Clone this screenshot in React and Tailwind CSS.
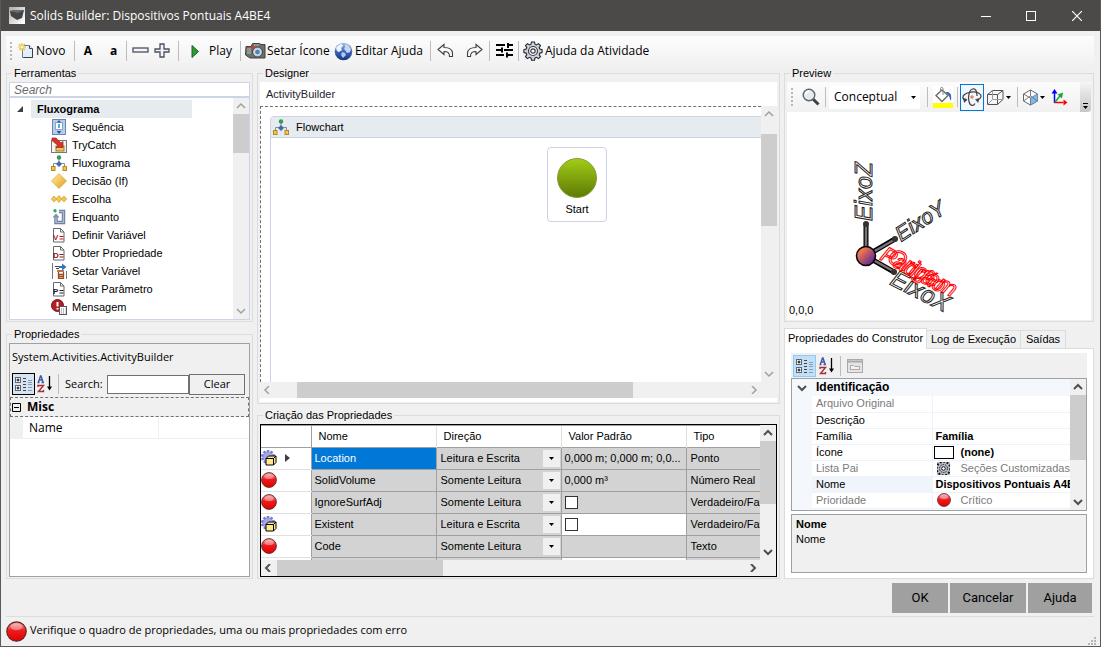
import React from 'react';

const UI = 'font-["Open_Sans",sans-serif]';

/* ---------- icons ---------- */

const NewIcon = () => (
    <svg width="16" height="16" viewBox="0 0 16 16">
        <path d="M4.500 2.500h7l3 3v9h-10z" fill="#e3eefb" stroke="#6a7d94" />
        <path d="M11.500 2.500v3h3" fill="#fff" stroke="#33475e" />
        <path d="M14.500 6v8.500h-9" fill="none" stroke="#2f4053" />
        <path d="M4 0v8M0 4h8M1 1l6 6M7 1l-6 6" stroke="#e9c23c" strokeWidth="1.200" />
        <circle cx="4" cy="4" r="1.500" fill="#fff7c0" />
    </svg>
);

const MinusIcon = () => (
    <svg width="17" height="16" viewBox="0 0 17 16">
        <rect x="1" y="5" width="15" height="4" fill="#f2f4fa" stroke="#4c5060" strokeWidth="1.300" />
    </svg>
);

const PlusIcon = () => (
    <svg width="16" height="16" viewBox="0 0 16 16">
        <path d="M6 1h4v5h5v3h-5v5h-4v-5h-5v-3h5z" fill="#f2f4fa" stroke="#4c5060" strokeWidth="1.300" />
    </svg>
);

const PlayIcon = () => (
    <svg width="8" height="13" viewBox="0 0 8 13">
        <path d="M1 .500l6.500 6-6.500 6z" fill="#2f9a32" stroke="#1d6322" />
    </svg>
);

const CameraIcon = () => (
    <svg width="21" height="18" viewBox="0 0 21 18">
        <path d="M1 4.500h5l1.500-3h7l1.500 1h4v13.500h-15l-4.500-3z" fill="#6d6f6c" stroke="#3f423f" />
        <path d="M2 7h4M2 9h4M2 11h4" stroke="#b8bab5" />
        <path d="M9 3h5" stroke="#b8bab5" />
        <circle cx="12.500" cy="10" r="5" fill="#b9c3cc" stroke="#41474c" />
        <circle cx="12.500" cy="10" r="3" fill="#4f86b8" stroke="#e8eef2" />
        <circle cx="7.500" cy="5.500" r="1.500" fill="#f22" />
    </svg>
);

const GlobeIcon = () => (
    <svg width="19" height="19" viewBox="0 0 19 19">
        <defs>
            <linearGradient id="globe" x2="0" y2="1">
                <stop offset="0" stopColor="#a8bfe6" />
                <stop offset=".500" stopColor="#3a68bd" />
                <stop offset="1" stopColor="#16347c" />
            </linearGradient>
        </defs>
        <circle cx="9.500" cy="9.500" r="8.800" fill="url(#globe)" />
        <path d="M2 6c2-3 4-4 6-4l1 2-2 2 1 2-3 2-2-1z" fill="#eef4fc" />
        <path d="M11 2l3 1 3 4-1 3-3 1-2-3-1-1 1-2z" fill="#c6d6f0" />
        <path d="M8 10l3 1 1 2-3 3-2-3z" fill="#b4c9ea" />
    </svg>
);

const UndoIcon = ({ flip }) => (
    <svg width="17" height="16" viewBox="0 0 17 16">
        <path
            d={
                flip
                    ? 'M16 6.500l-6-5v3c-5 0-8.500 2-8.500 6v3h3c0-3.500 1.500-5 5.500-5v3z'
                    : 'M1 6.500l6-5v3c5 0 8.500 2 8.500 6v3h-3c0-3.500-1.500-5-5.500-5v3z'
            }
            fill="#fafafa"
            stroke="#3c3f45"
            strokeWidth="1.100"
        />
    </svg>
);

const SlidersIcon = () => (
    <svg width="17" height="16" viewBox="0 0 17 16" stroke="#000" strokeWidth="2">
        <path d="M0 2h9M12 2h5M12 0v5M0 7h5M8 7h9M6 4.500v5M0 12h8M12 12h5M11 9.500v5" />
    </svg>
);

const GearIcon = () => (
    <svg width="20" height="20" viewBox="0 0 20 20">
        <path
            d="M8.500 1h3l.500 2.200 1.500.700 2-1.300 2 2-1.300 2 .700 1.500 2.200.500v3l-2.200.500-.700 1.500 1.300 2-2 2-2-1.300-1.500.700-.500 2.200h-3l-.500-2.200-1.500-.700-2 1.300-2-2 1.300-2-.700-1.500-2.200-.500v-3l2.200-.500.700-1.500-1.300-2 2-2 2 1.300 1.500-.700z"
            fill="#cdd1dc"
            stroke="#24272e"
            strokeWidth="1.100"
        />
        <circle cx="10" cy="10" r="4.500" fill="#f3f4f8" stroke="#3a3d46" strokeWidth="1.200" />
        <circle cx="10" cy="10" r="2.200" fill="#fff" stroke="#3a3d46" strokeWidth="1.200" />
    </svg>
);

const SmallGearIcon = () => (
    <svg width="13" height="13" viewBox="0 0 13 13" fill="none" stroke="#15171c">
        <rect width="13" height="13" fill="#b9bec9" stroke="none" />
        <circle cx="6.500" cy="6.500" r="6.800" strokeWidth="2" strokeDasharray="2 1.500" />
        <circle cx="6.500" cy="6.500" r="4" strokeDasharray="1.500 1" />
        <circle cx="6.500" cy="6.500" r="1.800" fill="#fff" />
    </svg>
);

const FlowIcon = () => (
    <svg width="16" height="16" viewBox="0 0 16 16">
        <path d="M8 4v4M2.500 11v-2.500h11v2.500" fill="none" stroke="#7e8fa8" />
        <circle cx="8" cy="2.500" r="2.200" fill="#2f9c55" />
        <path d="M8 6l3 3-3 3-3-3z" fill="#4668ad" />
        <rect x=".500" y="11.500" width="3.500" height="4" fill="#f0c64a" stroke="#b38a1f" />
        <rect x="12" y="11.500" width="3.500" height="4" fill="#f0c64a" stroke="#b38a1f" />
    </svg>
);

const SequenceIcon = () => (
    <svg width="16" height="16" viewBox="0 0 16 16">
        <rect x="1.500" y=".500" width="13" height="15" fill="#b9cdea" stroke="#6d86ad" />
        <rect x="4.500" y="3.500" width="7" height="7" fill="#fff" stroke="#8da4c6" />
        <path d="M8 1l2 2.500h-4zM8 15l2.500-3h-5z" fill="#2457b4" />
        <path d="M8 5v4" stroke="#49b7d6" strokeWidth="2" />
    </svg>
);

const TryIcon = () => (
    <svg width="16" height="16" viewBox="0 0 16 16">
        <rect x=".500" y="3.500" width="15" height="12" fill="#f3f3f3" stroke="#777" />
        <rect x="5" y="9" width="8" height="5" fill="#f3c95b" stroke="#9a7a28" />
        <path d="M1 1h4l5 5 2-1.500v6h-7l2-2-6-5z" fill="#dc3328" stroke="#9c1f18" strokeWidth=".700" />
    </svg>
);

const DecisionIcon = () => (
    <svg width="16" height="16" viewBox="0 0 16 16">
        <defs>
            <linearGradient id="gold" x2="1" y2="1">
                <stop offset=".200" stopColor="#fbe08a" />
                <stop offset=".900" stopColor="#e0a52a" />
            </linearGradient>
        </defs>
        <path d="M8 .500l7.500 7.500-7.500 7.500-7.500-7.500z" fill="url(#gold)" stroke="#d6a433" strokeWidth=".700" />
    </svg>
);

const ChoiceIcon = () => (
    <svg width="16" height="16" viewBox="0 0 16 16" fill="#f3c84e" stroke="#cf9d2a" strokeWidth=".700">
        <path d="M3 5l2.700 3-2.700 3-2.700-3z" />
        <path d="M13 5l2.700 3-2.700 3-2.700-3z" />
        <path d="M8 4.500l3 3.500-3 3.500-3-3.500z" />
    </svg>
);

const WhileIcon = () => (
    <svg width="16" height="16" viewBox="0 0 16 16">
        <path d="M8 2.500h4.500v11h-7.500v-6" fill="none" stroke="#62748f" strokeWidth="3.400" />
        <path d="M8 2.500h4.500v11h-7.500v-6" fill="none" stroke="#a9bbd6" strokeWidth="1.600" />
        <path d="M5 4.500l3.500 4h-7z" fill="#7d90ad" />
        <circle cx="4" cy="1.800" r="1.700" fill="#35a765" />
    </svg>
);

const DocIcon = ({ letter, color }) => (
    <svg width="16" height="16" viewBox="0 0 16 16">
        <path d="M2.500 1.500h7l3.500 3.500v10h-10.500z" fill="#fff" stroke="#686868" />
        <path d="M9.500 1.500v3.500h3.500" fill="none" stroke="#686868" />
        <text x="2" y="13" fontSize="8" fontWeight="700" fontFamily="Liberation Sans" fill={color}>
            {letter}
        </text>
        <path d="M8.500 9.500h4M8.500 12h4" stroke={color} />
    </svg>
);

const SetVarIcon = () => (
    <svg width="16" height="16" viewBox="0 0 16 16">
        <path d="M1.500 0v16M15.500 8v8" stroke="#777" />
        <path d="M4 3.500h4M5 5.500h3" stroke="#444" />
        <path d="M8 3h3v-2.500l4.500 3.500-4.500 3.500v-2.500h-3z" fill="#2f74c0" />
        <path d="M6 8h7M7.500 9v6.500h5v-6.500M7 11.500h5M7 13.500h5" fill="none" stroke="#9c4a1c" strokeWidth="1.300" />
    </svg>
);

const MessageIcon = () => (
    <svg width="16" height="16" viewBox="0 0 16 16">
        <circle cx="6.500" cy="6.500" r="6" fill="#b21f24" stroke="#7c1216" />
        <path d="M6.500 3v4.500M6.500 9v1.500" stroke="#fff" strokeWidth="2" />
        <rect x="8.500" y="7.500" width="7" height="8" fill="#fff" stroke="#555" />
        <path d="M10 10h4.500M10 12h4.500M10 14h4.500" stroke="#777" strokeDasharray="1 1" />
    </svg>
);

const CategoryIcon = () => (
    <svg width="18" height="16" viewBox="0 0 18 16">
        <rect x=".500" y="1.500" width="5" height="5" fill="#fff" stroke="#5a6578" />
        <rect x=".500" y="9.500" width="5" height="5" fill="#fff" stroke="#5a6578" />
        <path d="M1.500 4h3M3 2.500v3M1.500 12h3M3 10.500v3" stroke="#000" />
        <path d="M8 2.500h3M8 5.500h3M8 8.500h3M8 11.500h3M8 14.500h3" stroke="#444" />
        <path d="M13 4.500h4M13 6.500h4M13 8.500h4M13 11.500h4M13 14.500h4" stroke="#8c9ab2" />
    </svg>
);

const SortIcon = () => (
    <svg width="16" height="18" viewBox="0 0 16 18">
        <path d="M.500 7.500h2M4.500 7.500h2.500M1.500 7l2-6h.500l2 6M2.500 5h3" fill="none" stroke="#3a5ba8" strokeWidth="1.400" />
        <path d="M1 12v-1.500h5.500l-5 6h5v-1.500" fill="none" stroke="#a5303a" strokeWidth="1.400" />
        <path d="M12.500 1v12" stroke="#000" strokeWidth="1.300" />
        <path d="M10 11.500h5l-2.500 4z" />
    </svg>
);

const RedBall = ({ size }) => (
    <svg width={size} height={size} viewBox="0 0 16 16" className="shrink-0">
        <defs>
            <linearGradient id="ball" x2="0" y2="1">
                <stop offset="0" stopColor="#f6a9a9" />
                <stop offset=".450" stopColor="#ee1c1c" />
                <stop offset="1" stopColor="#e00000" />
            </linearGradient>
        </defs>
        <circle cx="8" cy="8" r="7.400" fill="url(#ball)" stroke="#5e2626" strokeWidth=".900" />
        <ellipse cx="8" cy="4.500" rx="4.500" ry="2.600" fill="#fff" fillOpacity=".350" />
    </svg>
);

const GearBox = () => (
    <svg width="16" height="16" viewBox="0 0 16 16">
        <circle cx="7" cy="7" r="6" fill="none" stroke="#7678cc" strokeWidth="2.200" strokeDasharray="2.400 1.370" />
        <circle cx="7" cy="7" r="5.200" fill="#a3a5ec" stroke="#7678cc" strokeWidth=".700" />
        <path d="M5 8.500l2.500-2.500h7.500v6.500l-2.500 2.500h-7.500z" fill="#ffe98a" stroke="#000" />
        <path d="M5 8.500h7.500v6.500M12.500 8.500l2.500-2.500" fill="none" stroke="#000" />
    </svg>
);

const MagnifierIcon = () => (
    <svg width="18" height="18" viewBox="0 0 18 18">
        <path d="M11 11l5.500 5.500" stroke="#3c4146" strokeWidth="3" />
        <circle cx="7" cy="7" r="5.800" fill="#e3edf0" stroke="#5d666b" strokeWidth="1.400" />
        <path d="M3.500 6c.500-2 2-2.800 4-2.800" fill="none" stroke="#fff" strokeWidth="1.500" />
    </svg>
);

const BucketIcon = () => (
    <svg width="20" height="22" viewBox="0 0 20 22">
        <rect width="20" height="17" fill="#fff" />
        <rect y="17" width="20" height="5" fill="#ff0" />
        <path d="M9 4l6 5.500-6 6-6-6z" fill="#fff" stroke="#666" strokeWidth="1.300" />
        <path d="M10 9v-6.500c0-1.500-2.500-1.500-2.500 0v3.500" fill="none" stroke="#888" />
        <path d="M12.500 6c4.500-.500 6.500 2 5.500 8.500-1.500-1-1-4-3-6z" fill="#2a6ba8" />
    </svg>
);

const OrbitIcon = () => (
    <svg width="20" height="19" viewBox="0 0 20 19" fill="none" stroke="#3f4347" strokeWidth="1.200">
        <path d="M13 15.500c-1.500 3-5 2.500-6-2s0-11.500 3.500-12.500 4.500 3 4.500 7" />
        <path d="M4.500 12.500c-3.500-.500-5-3.500-2-6s10-3.500 14-1.500 3 5.500-1 7" />
        <path d="M1 10l4 1.500-2.500 3zM13.500 11.500l3.500-1-1 4z" fill="#3f4347" strokeWidth=".500" />
        <path d="M8 9h4M10 7v4" stroke="#d76a3a" strokeWidth="1" />
    </svg>
);

const WireCubeIcon = () => (
    <svg width="17" height="17" viewBox="0 0 17 17" fill="none" stroke="#50545a">
        <path d="M.500 5.500h10v10h-10zM.500 5.500l5-4h10.500l-5.500 4M16 1.500v9l-5.500 5" />
        <path d="M5.500 1.500v9h10.500M.500 15.500l5-5" stroke="#9a9ea4" />
    </svg>
);

const ShadedCubeIcon = () => (
    <svg width="17" height="17" viewBox="0 0 17 17">
        <path d="M8.500 1l7 4v7l-7 4-7-4v-7z" fill="#fff" stroke="#666" />
        <path d="M8.500 9l7-4v7l-7 4z" fill="#7dbbed" stroke="#6c8ca8" />
        <path d="M1.500 5l7 4v7M8.500 1v6M1.500 12l7-5 7 5" fill="none" stroke="#777" />
    </svg>
);

const AxesIcon = () => (
    <svg width="17" height="17" viewBox="0 0 17 17">
        <path d="M3.500 14v-10" stroke="#00f" strokeWidth="1.500" />
        <path d="M3.500 0l3 4.500h-6z" fill="#00f" />
        <path d="M3.500 13.500h9" stroke="#f00" strokeWidth="1.500" />
        <path d="M16.500 13.500l-4 3v-6z" fill="#f00" />
        <path d="M4 13l5-6" stroke="#19a72c" strokeWidth="1.500" />
        <path d="M12 3.500l-1 6-4.500-4z" fill="#19a72c" />
    </svg>
);

const PagesIcon = () => (
    <svg width="16" height="14" viewBox="0 0 16 14" stroke="#a9a9a9" fill="#e4e4e4">
        <rect x=".500" y=".500" width="15" height="13" />
        <path d="M.500 2.500h15" strokeWidth="2" />
        <path d="M3.500 6.500h3l1 1h5v3h-9z" fill="#f4f4f4" />
    </svg>
);

const Caret = () => (
    <svg width="5" height="3" viewBox="0 0 5 3" className="shrink-0">
        <path d="M0 0h5l-2.500 3z" />
    </svg>
);

const chevrons = {
    up: 'M1 6l4-4 4 4',
    down: 'M1 2l4 4 4-4',
    left: 'M6 0l-4 4 4 4',
    right: 'M4 0l4 4-4 4',
};

const Chevron = ({ dir, bold }) => (
    <svg width="10" height="8" viewBox="0 0 10 8" className="shrink-0">
        <path d={chevrons[dir]} fill="none" stroke={bold ? '#505050' : '#a0a0a0'} strokeWidth={bold ? 2 : 1.5} />
    </svg>
);

/* ---------- shared pieces ---------- */

const VScroll = ({ bold, thumb }) => (
    <div className="flex w-4 shrink-0 flex-col bg-[#f0f0f0]">
        <div className="flex h-4 items-center justify-center"><Chevron dir="up" bold={bold} /></div>
        <div className="min-h-0 flex-1"><div className={`bg-[#cdcdcd] ${thumb}`} /></div>
        <div className="flex h-4 items-center justify-center"><Chevron dir="down" bold={bold} /></div>
    </div>
);

const HScroll = ({ bold, thumb }) => (
    <div className="flex h-4 min-w-0 flex-1 bg-[#f0f0f0]">
        <div className="flex w-4 items-center justify-center"><Chevron dir="left" bold={bold} /></div>
        <div className="flex min-w-0 flex-1"><div className={`bg-[#cdcdcd] ${thumb}`} /></div>
        <div className="flex w-4 items-center justify-center"><Chevron dir="right" bold={bold} /></div>
    </div>
);

const Group = ({ title, className = '', children }) => (
    <fieldset className="flex min-h-0 min-w-0 flex-col border border-[#dcdcdc] px-[2px] pb-px">
        <legend className="ml-[3px] px-[2px] leading-[14px]">{title}</legend>
        <div className={`flex min-h-0 flex-1 flex-col ${className}`}>{children}</div>
    </fieldset>
);

const Grip = () => <div className="mx-1 h-[18px] w-0 border-l-2 border-dotted border-[#b8b8b8]" />;
const Sep = () => <div className="h-5 w-px shrink-0 bg-[#bdbdbd]" />;

const ToolButton = ({ className, label, children }) => (
    <button aria-label={label} className={`flex h-6 shrink-0 items-center whitespace-nowrap ${className}`}>
        {children}
    </button>
);

/* ---------- panels ---------- */

const TitleBar = () => (
    <header className={`flex h-[31px] shrink-0 items-center bg-[#4b4a48] pl-2 text-white ${UI}`}>
        <svg width="16" height="17" viewBox="0 0 16 17">
            <defs>
                <linearGradient id="app" x2="1" y2="1">
                    <stop offset="0" stopColor="#a9a9a9" />
                    <stop offset=".900" stopColor="#fff" />
                </linearGradient>
            </defs>
            <rect width="16" height="17" fill="url(#app)" />
            <path d="M1 4l5-1 9 0-2 8-5 2-6-4z" fill="#444" />
            <path d="M1 4l5-1 9 0-6 3z" fill="#6a6a6a" />
        </svg>
        <h1 className="ml-[5px] flex-1 text-[12px]">Solids Builder: Dispositivos Pontuais A4BE4</h1>
        <button aria-label="Minimizar" className="flex h-full w-[45px] items-center justify-center">
            <svg width="10" height="10" viewBox="0 0 10 10"><path d="M0 5.500h10" stroke="#fff" /></svg>
        </button>
        <button aria-label="Maximizar" className="flex h-full w-[45px] items-center justify-center">
            <svg width="10" height="10" viewBox="0 0 10 10"><rect x=".500" y=".500" width="9" height="9" fill="none" stroke="#fff" /></svg>
        </button>
        <button aria-label="Fechar" className="flex h-full w-[47px] items-center justify-center">
            <svg width="10" height="10" viewBox="0 0 10 10"><path d="M0 0l10 10M10 0l-10 10" stroke="#fff" strokeWidth="1.200" /></svg>
        </button>
    </header>
);

const Toolbar = () => (
    <div className={`flex h-[30px] shrink-0 items-center bg-gradient-to-b from-[#fdfdfd] to-[#f1f1f1] text-[12px] ${UI}`}>
        <Grip />
        <ToolButton className="w-[58px] gap-[2px] pl-[2px]"><NewIcon />Novo</ToolButton>
        <Sep />
        <ToolButton className="w-[26px] justify-center font-bold">A</ToolButton>
        <ToolButton className="w-[25px] justify-center font-bold">a</ToolButton>
        <Sep />
        <ToolButton label="Diminuir" className="w-[27px] justify-center"><MinusIcon /></ToolButton>
        <ToolButton label="Aumentar" className="w-[24px] justify-start"><PlusIcon /></ToolButton>
        <Sep />
        <ToolButton className="w-[61px] gap-[10px] pl-3"><PlayIcon />Play</ToolButton>
        <Sep />
        <ToolButton className="w-[93px] gap-px pl-1"><CameraIcon />Setar Ícone</ToolButton>
        <ToolButton className="w-[96px] gap-[2px]"><GlobeIcon />Editar Ajuda</ToolButton>
        <Sep />
        <ToolButton label="Desfazer" className="w-[29px] justify-center"><UndoIcon /></ToolButton>
        <ToolButton label="Refazer" className="w-[29px] justify-center"><UndoIcon flip /></ToolButton>
        <Sep />
        <ToolButton label="Opções" className="w-[28px] justify-center"><SlidersIcon /></ToolButton>
        <Sep />
        <ToolButton className="gap-[2px] pl-1"><GearIcon />Ajuda da Atividade</ToolButton>
    </div>
);

const tools = [
    { name: 'Sequência', icon: <SequenceIcon /> },
    { name: 'TryCatch', icon: <TryIcon /> },
    { name: 'Fluxograma', icon: <FlowIcon /> },
    { name: 'Decisão (If)', icon: <DecisionIcon /> },
    { name: 'Escolha', icon: <ChoiceIcon /> },
    { name: 'Enquanto', icon: <WhileIcon /> },
    { name: 'Definir Variável', icon: <DocIcon letter="V" color="#c01818" /> },
    { name: 'Obter Propriedade', icon: <DocIcon letter="D" color="#8e1414" /> },
    { name: 'Setar Variável', icon: <SetVarIcon /> },
    { name: 'Setar Parâmetro', icon: <DocIcon letter="P" color="#222222" /> },
    { name: 'Mensagem', icon: <MessageIcon /> },
];

const ToolsPanel = () => (
    <Group title="Ferramentas" className="pt-[2px]">
        <input
            aria-label="Search"
            placeholder="Search"
            className="h-[15px] w-full shrink-0 border border-[#ccd5e6] bg-white px-1 text-[12px] leading-[13px] italic outline-none placeholder:text-[#6b6b6b]"
        />
        <div className="flex min-h-0 flex-1 border border-[#ccd5e6] bg-white">
            <div className="min-w-0 flex-1 overflow-hidden pt-[2px]">
                <div className="flex h-[18px] items-center">
                    <svg width="7" height="7" viewBox="0 0 7 7" className="mx-[7px]"><path d="M6 0v6h-6z" fill="#404040" /></svg>
                    <span className="w-[161px] bg-[#e6ebf0] pl-[6px] leading-[18px] font-bold">Fluxograma</span>
                </div>
                <ul>
                    {tools.map((tool) => (
                        <li key={tool.name} className="flex h-[18px] items-center gap-[5px] pl-[41px]">
                            {tool.icon}
                            {tool.name}
                        </li>
                    ))}
                </ul>
            </div>
            <VScroll thumb="h-[39px]" />
        </div>
    </Group>
);

const PropertiesPanel = () => (
    <Group title="Propriedades" className="pt-[2px]">
        <div className="flex min-h-0 flex-1 flex-col border border-[#a0a0a0]">
            <div className={`h-[27px] shrink-0 px-[2px] text-[11px] leading-[26px] ${UI}`}>System.Activities.ActivityBuilder</div>
            <div className={`flex h-[26px] shrink-0 items-center px-[2px] text-[11px] ${UI}`}>
                <button aria-label="Categorias" className="flex h-[22px] w-[23px] items-center justify-center border border-black bg-[#d5e3f3]"><CategoryIcon /></button>
                <button aria-label="Ordenar" className="mr-[5px] ml-[2px]"><SortIcon /></button>
                <Sep />
                <label htmlFor="prop-search" className="w-[48px] pl-[6px]">Search:</label>
                <input id="prop-search" className="h-[19px] min-w-0 flex-1 border border-[#707070] bg-white outline-none" />
                <button className="mr-[2px] h-[21px] w-[56px] border border-[#707070]">Clear</button>
            </div>
            <div className={`flex h-[20px] shrink-0 items-center gap-[6px] border border-dashed border-[#707070] pl-px text-[12px] font-bold ${UI}`}>
                <svg width="9" height="9" viewBox="0 0 9 9" fill="none" stroke="#000"><path d="M.500 .500h8v8h-8zM2 4.500h5" /></svg>
                Misc
            </div>
            <div className={`flex min-h-0 flex-1 flex-col bg-white text-[12px] ${UI}`}>
                <div className="flex h-[22px] border-b border-[#f0f0f0]">
                    <div className="w-[13px] bg-[#f0f0f0]" />
                    <div className="w-[136px] border-r border-[#f0f0f0] pl-[6px] leading-[22px]">Name</div>
                </div>
            </div>
        </div>
    </Group>
);

const DesignerPanel = () => (
    <Group title="Designer" className="pt-[2px]">
        <div className="flex min-h-0 flex-1 flex-col bg-white pb-1">
            <div className="h-6 shrink-0 pl-[6px] leading-6 text-[#1e2430]">ActivityBuilder</div>
            <div className="flex min-h-0 flex-1">
                <div className="min-w-0 flex-1 overflow-hidden border-t border-l border-dashed border-[#707070] pt-[9px] pl-[9px]">
                    <div className="relative h-full rounded-tl-sm border-t border-l border-[#ccd3e6]">
                        <div className="flex h-[21px] items-center gap-[7px] border-b border-[#ccd3e6] bg-[#e6ebf0] pl-[2px]">
                            <FlowIcon />
                            <span className="leading-[19px]">Flowchart</span>
                        </div>
                        <div className="absolute top-[30px] left-[276px] flex h-[75px] w-[60px] flex-col items-center gap-1 rounded border border-[#ccd3e6] bg-white pt-[10px] leading-[14px]">
                            <div className="h-10 w-10 rounded-full border border-[#84993a] bg-gradient-to-b from-[#a2cc17] to-[#5f7c05]" />
                            Start
                        </div>
                    </div>
                </div>
                <VScroll thumb="mt-3 h-[92px]" />
            </div>
            <div className="flex shrink-0">
                <HScroll thumb="ml-[21px] w-[336px]" />
                <div className="w-4 bg-[#f0f0f0]" />
            </div>
        </div>
    </Group>
);

const rows = [
    { name: 'Location', dir: 'Leitura e Escrita', value: '0,000 m; 0,000 m; 0,0...', type: 'Ponto', gear: true, current: true },
    { name: 'SolidVolume', dir: 'Somente Leitura', value: '0,000 m³', type: 'Número Real' },
    { name: 'IgnoreSurfAdj', dir: 'Somente Leitura', check: true, type: 'Verdadeiro/Falso' },
    { name: 'Existent', dir: 'Leitura e Escrita', check: true, type: 'Verdadeiro/Falso', gear: true, editable: true },
    { name: 'Code', dir: 'Somente Leitura', type: 'Texto' },
    { name: '', dir: '', type: '', editable: true },
];

const CreationPanel = () => (
    <Group title="Criação das Propriedades" className="pt-[2px]">
        <div className="flex min-h-0 flex-1 flex-col border border-black bg-[#f0f0f0]">
            <div className="flex min-h-0 flex-1">
                <div className="min-w-0 flex-1 overflow-hidden border-t border-[#a0a0a0] bg-white">
                    <table className="w-[550px] table-fixed border-collapse text-left">
                        <colgroup>
                            <col className="w-[50px]" />
                            <col className="w-[125px]" />
                            <col className="w-[125px]" />
                            <col className="w-[125px]" />
                            <col className="w-[125px]" />
                        </colgroup>
                        <thead>
                            <tr className="h-[21px] border-b border-[#a0a0a0]">
                                <th className="border-r border-[#a0a0a0]" />
                                {['Nome', 'Direção', 'Valor Padrão', 'Tipo'].map((h) => (
                                    <th key={h} className="border-r border-[#e0e0e0] pl-[7px] font-normal">{h}</th>
                                ))}
                            </tr>
                        </thead>
                        <tbody>
                            {rows.map((row, i) => (
                                <tr key={i} className="h-[22px]">
                                    <td className="border-r border-b border-r-[#a0a0a0] border-b-[#e0e0e0]">
                                        {row.name && (
                                            <div className="flex items-center gap-2">
                                                {row.gear ? <GearBox /> : <RedBall size={16} />}
                                                {row.current && <svg width="5" height="8" viewBox="0 0 5 8"><path d="M0 0l5 4-5 4z" fill="#404040" /></svg>}
                                            </div>
                                        )}
                                    </td>
                                    <td className={`border border-[#a0a0a0] pl-[3px] ${row.current ? 'bg-[#0078d7] text-white' : 'bg-[#d3d3d3]'}`}>{row.name}</td>
                                    <td className="border border-[#a0a0a0] bg-[#d3d3d3] p-0">
                                        <div className="flex h-[21px]">
                                            <select aria-label={`Direção ${row.name}`} className="min-w-0 flex-1 appearance-none pl-1 outline-none">
                                                <option>{row.dir}</option>
                                            </select>
                                            <span className="my-[2px] mr-px flex w-[17px] items-center justify-center bg-[#f0f0f0]"><Caret /></span>
                                        </div>
                                    </td>
                                    <td className={`border border-[#a0a0a0] pl-[3px] ${row.editable ? 'bg-white' : 'bg-[#d3d3d3]'}`}>
                                        {row.check ? (
                                            <input type="checkbox" aria-label={row.name} className="block h-[13px] w-[13px] appearance-none border border-[#333] bg-white" />
                                        ) : (
                                            row.value
                                        )}
                                    </td>
                                    <td className="border border-[#a0a0a0] bg-[#d3d3d3] pl-1 whitespace-nowrap">{row.type}</td>
                                </tr>
                            ))}
                        </tbody>
                    </table>
                </div>
                <VScroll bold thumb="h-[63px]" />
            </div>
            <div className="flex shrink-0">
                <HScroll bold thumb="w-[166px]" />
                <div className="w-4" />
            </div>
        </div>
    </Group>
);

const AxesScene = () => (
    <svg width="305" height="190" viewBox="787 113 305 190" className="overflow-visible">
        <defs>
            <linearGradient id="origin" x2="1" y2="1">
                <stop offset=".200" stopColor="#ff7a45" />
                <stop offset=".900" stopColor="#51259a" />
            </linearGradient>
        </defs>
        <g strokeLinecap="round">
            <path d="M866 255v-28M866 257l29-17M866 257l28 16" stroke="#000" strokeWidth="5" />
            <path d="M866 255v-27M866 257l28-16M866 257l27 15" stroke="#77747c" strokeWidth="2.500" />
        </g>
        <g fill="#333">
            <circle cx="866" cy="225" r="3" />
            <circle cx="895" cy="240" r="3" />
            <circle cx="894" cy="273" r="3" />
        </g>
        <circle cx="866" cy="257" r="9.500" fill="url(#origin)" stroke="#000" strokeWidth="1.500" />
        <g fontFamily="Liberation Sans" fontStyle="italic" fill="#fff" stroke="#222" strokeWidth="1">
            <text fontSize="23" transform="translate(872 222) rotate(-90)">EixoZ</text>
            <text fontSize="21" transform="translate(901 243) rotate(-33)">EixoY</text>
            <text fontSize="24" transform="translate(889 285) rotate(27)">EixoX</text>
        </g>
        <g fontFamily="Liberation Sans" fontStyle="italic" fill="none" stroke="#f00" strokeWidth="1">
            <text fontSize="22" transform="translate(879 260) rotate(29)">Padrão</text>
            <text fontSize="23" transform="translate(886 262) rotate(29)">Origem</text>
        </g>
    </svg>
);

const PreviewPanel = () => (
    <Group title="Preview" className="pt-[2px]">
        <div className="flex h-[30px] shrink-0 items-center bg-gradient-to-b from-[#fcfcfc] to-[#f1f1f1]">
            <Grip />
            <ToolButton label="Zoom" className="w-[28px] justify-center"><MagnifierIcon /></ToolButton>
            <Sep />
            <div className={`mx-[3px] flex h-6 w-[91px] items-center bg-white pr-1 text-[12px] ${UI}`}>
                <select aria-label="Estilo visual" className="min-w-0 flex-1 appearance-none pl-[5px] outline-none">
                    <option>Conceptual</option>
                </select>
                <Caret />
            </div>
            <div className="w-1" />
            <Sep />
            <ToolButton label="Cor de fundo" className="w-[29px] justify-center"><BucketIcon /></ToolButton>
            <Sep />
            <button aria-label="Órbita" className="mx-[2px] flex h-[27px] w-[24px] shrink-0 items-center justify-center border border-[#0078d7] bg-[#f3f6fa]"><OrbitIcon /></button>
            <ToolButton label="Vistas" className="w-[31px] gap-[2px] pl-px"><WireCubeIcon /><Caret /></ToolButton>
            <Sep />
            <ToolButton label="Faces" className="w-[33px] gap-px pl-1"><ShadedCubeIcon /><Caret /></ToolButton>
            <ToolButton label="Eixos"><AxesIcon /></ToolButton>
            <button aria-label="Mais" className="ml-auto flex h-full w-[11px] flex-col items-center justify-end gap-[2px] rounded-r bg-gradient-to-b from-[#f4f4f4] to-[#c6c6c6] pb-[3px]">
                <span className="h-px w-[5px] bg-black" />
                <Caret />
            </button>
        </div>
        <div className="flex min-h-0 flex-1 flex-col justify-between bg-white">
            <AxesScene />
            <span className="pb-[3px] pl-[2px] leading-[14px]">0,0,0</span>
        </div>
    </Group>
);

const props = [
    { name: 'Arquivo Original', off: true },
    { name: 'Descrição' },
    { name: 'Família', value: 'Família' },
    { name: 'Ícone', value: '(none)', icon: <span className="h-[13px] w-5 border border-black bg-white" /> },
    { name: 'Lista Pai', value: 'Seções Customizadas', off: true, icon: <SmallGearIcon /> },
    { name: 'Nome', value: 'Dispositivos Pontuais A4BE4', selected: true },
    { name: 'Prioridade', value: 'Crítico', off: true, icon: <RedBall size={14} /> },
];

const BuilderPanel = () => (
    <section className="flex min-h-0 min-w-0 flex-col">
        <div role="tablist" className="flex h-5 shrink-0 items-end">
            <button role="tab" aria-selected="true" className="z-10 -mb-px h-[21px] w-[143px] border border-b-0 border-[#dcdcdc] bg-white pb-[2px] whitespace-nowrap">Propriedades do Construtor</button>
            <button role="tab" className="h-[18px] w-[94px] border border-b-0 border-l-0 border-[#dcdcdc] whitespace-nowrap">Log de Execução</button>
            <button role="tab" className="h-[18px] w-[45px] border border-b-0 border-l-0 border-[#dcdcdc]">Saídas</button>
        </div>
        <div className="flex min-h-0 flex-1 flex-col border border-[#dcdcdc] bg-white px-[6px] pt-1 pb-[5px]">
            <div className="flex h-[25px] shrink-0 items-center bg-[#f0f0f0] pl-[2px]">
                <button aria-label="Por categoria" className="flex h-[22px] w-[23px] items-center justify-center border border-[#90c8f6] bg-[#c2dff5]"><CategoryIcon /></button>
                <button aria-label="Alfabética" className="mr-[5px] ml-[3px]"><SortIcon /></button>
                <Sep />
                <button aria-label="Páginas de propriedades" className="ml-[6px]"><PagesIcon /></button>
            </div>
            <div className="flex min-h-0 flex-1 border border-[#a0a0a0]">
                <div className="min-w-0 flex-1 overflow-hidden bg-[#f4f7fc]">
                    <div className="flex h-[17px] items-center gap-[9px] pl-[5px] text-[12px] leading-[15px] font-bold">
                        <Chevron dir="down" bold />
                        Identificação
                    </div>
                    <table className="w-full table-fixed border-collapse">
                        <tbody>
                            {props.map((p) => (
                                <tr key={p.name} className={`h-4 ${p.off ? 'text-[#7a7a7a]' : ''}`}>
                                    <td className="w-5 p-0" />
                                    <td className={`w-[120px] border-r border-b border-[#eef2fa] p-0 pl-1 leading-[15px] ${p.selected ? 'bg-[#f0f5fc]' : 'bg-white'}`}>{p.name}</td>
                                    <td className="overflow-hidden border-b border-[#eef2fa] bg-white p-0 whitespace-nowrap">
                                        <div className={`flex h-[15px] items-center leading-[15px] ${p.off ? '' : 'font-bold'}`}>
                                            {p.icon && <span className="mr-[6px] flex w-[22px] justify-center">{p.icon}</span>}
                                            <span className={p.icon ? '' : 'pl-[3px]'}>{p.value}</span>
                                        </div>
                                    </td>
                                </tr>
                            ))}
                        </tbody>
                    </table>
                </div>
                <VScroll bold thumb="h-[65px]" />
            </div>
            <div className="mt-[3px] h-[59px] shrink-0 border border-[#a0a0a0] bg-[#f0f0f0] px-1 pt-[2px] leading-[15px]">
                <div className="font-bold">Nome</div>
                <div>Nome</div>
            </div>
        </div>
    </section>
);

const App = () => (
    <div className="flex h-screen flex-col overflow-hidden border border-t-0 border-[#5a5a5a] bg-[#f0f0f0] font-['Liberation_Sans',sans-serif] text-[11px] text-black">
        <TitleBar />
        <div className="flex min-h-0 flex-1 flex-col pt-[5px] pr-[6px] pl-[5px]">
            <Toolbar />
            <main className="grid min-h-0 flex-1 grid-cols-[247px_minmax(0,1fr)_310px] gap-1">
                <div className="grid min-h-0 grid-rows-[256fr_252fr] gap-[5px]">
                    <ToolsPanel />
                    <PropertiesPanel />
                </div>
                <div className="grid min-h-0 grid-rows-[338fr_171fr] gap-1">
                    <DesignerPanel />
                    <CreationPanel />
                </div>
                <div className="grid min-h-0 grid-rows-[256fr_251fr] gap-[6px]">
                    <PreviewPanel />
                    <BuilderPanel />
                </div>
            </main>
            <div className="flex shrink-0 justify-end gap-[2px] border-b border-[#dcdcdc] pt-1 pr-[2px] pb-[3px] font-['Roboto',sans-serif] text-[13px]">
                <button className="h-[30px] w-14 bg-[#a0a0a0]">OK</button>
                <button className="h-[30px] w-[76px] bg-[#a0a0a0]">Cancelar</button>
                <button className="h-[30px] w-16 bg-[#a0a0a0]">Ajuda</button>
            </div>
        </div>
        <footer className={`flex h-[29px] shrink-0 items-center gap-[3px] pl-[5px] text-[11px] ${UI}`}>
            <RedBall size={21} />
            <span className="flex-1 pb-[3px]">Verifique o quadro de propriedades, uma ou mais propriedades com erro</span>
            <svg width="9" height="9" viewBox="0 0 9 9" className="mr-[3px] self-end" fill="#b5b5b5">
                <path d="M6 0h2v2h-2zM6 3h2v2h-2zM6 6h2v2h-2zM3 3h2v2h-2zM3 6h2v2h-2zM0 6h2v2h-2z" />
            </svg>
        </footer>
    </div>
);

export default App;
